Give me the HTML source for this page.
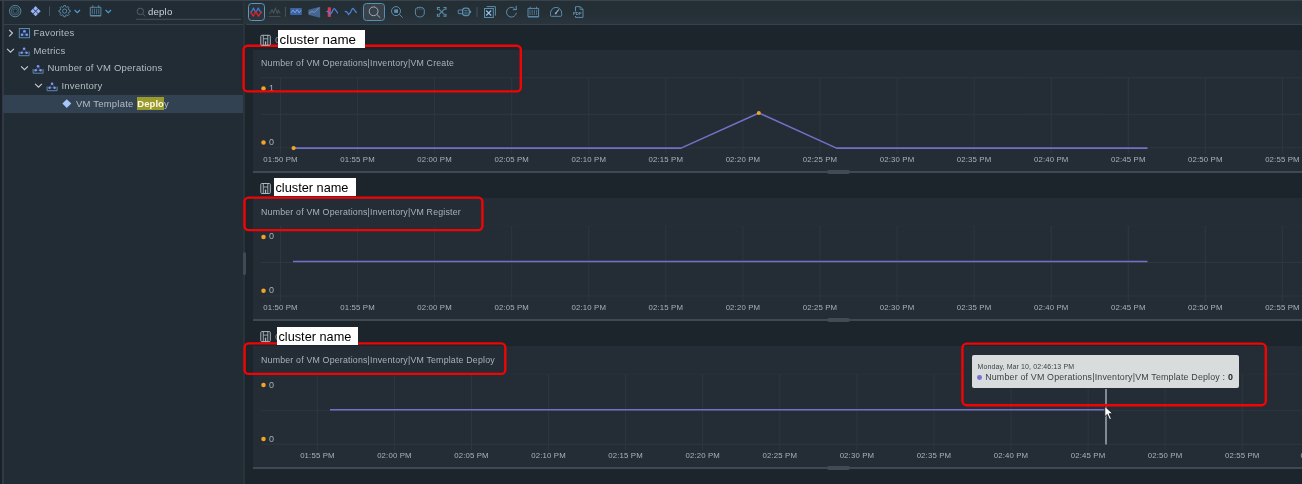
<!DOCTYPE html>
<html><head><meta charset="utf-8"><title>Metrics</title>
<style>
html,body{margin:0;padding:0;}
body{width:1302px;height:484px;overflow:hidden;background:#1c252c;font-family:"Liberation Sans", sans-serif;position:relative;color:#b4bcc3;}
div,svg{position:absolute;}
.row,.ctitle,.ylab,.wb,.tip,.sh,.q{will-change:transform;}
.ov{left:0;top:0;pointer-events:none;will-change:transform;}
.left{left:4px;top:0;width:239px;height:484px;background:#222c35;}
.edge{left:0;top:0;width:4px;height:484px;background:linear-gradient(90deg,#1a2028 0,#1a2028 1.8px,#313a43 2.2px,#313a43 3.8px,#232c35 4px);}
.split{left:243px;top:0;width:2.4px;height:484px;background:#29333c;}
.topbar{left:0;top:0;width:1302px;height:1.2px;background:#39424a;}
.tline{top:23.5px;height:1px;background:#35414b;}
.row{left:3px;width:240px;height:17.5px;font-size:9.5px;letter-spacing:0.2px;line-height:17.5px;color:#b4bcc3;white-space:nowrap;}
.row span.t{position:absolute;top:0;}
.selbg{left:3px;width:240px;top:95.3px;height:17.6px;background:#324252;}
.hl{background:#9b9a2c;color:#fbf9e4;font-weight:bold;padding:0.9px 0 1.2px 0.6px;margin-left:0.4px;letter-spacing:0.05px;}
.panel{left:253px;width:1049px;height:122px;background:#242d35;}
.pline{left:253px;width:1049px;height:2.1px;background:#3e4952;}
.handle{left:826.7px;width:23.7px;height:4.2px;background:#414b54;border-radius:2px;}
.ctitle{left:260.5px;font-size:8.8px;letter-spacing:0.19px;line-height:12px;color:#a9b2ba;white-space:nowrap;}
.ylab{left:268.6px;font-size:9px;line-height:12px;color:#a9b2ba;}
.xl text{font-size:7.8px;letter-spacing:0.14px;fill:#a9b2ba;font-family:"Liberation Sans", sans-serif;}
.wb{background:#fff;color:#000;font-size:13.6px;line-height:18px;white-space:nowrap;}
.tip{left:972px;top:355.2px;width:266.8px;height:33.3px;background:#d9dcdd;border-radius:2px;}
.tip .l1{left:5.5px;top:6.6px;font-size:7px;letter-spacing:0.11px;line-height:10px;color:#3c4247;white-space:nowrap;}
.tip .l2{left:13.2px;top:16.2px;font-size:8.9px;letter-spacing:0.17px;line-height:12px;color:#3c4247;white-space:nowrap;}
.tip .d{left:5.4px;top:20px;width:4.8px;height:4.8px;border-radius:50%;background:#7b6fd6;}
.sh{font-size:10px;color:#8a949c;}
</style></head><body>
<div class="edge"></div>
<div class="left"></div>
<div class="split"></div>
<div style="left:245.4px;top:0;width:1057px;height:24px;background:linear-gradient(#242e35 0%,#252f36 55%,#2a343c 100%)"></div>
<div class="tline" style="left:3px;width:240px"></div>
<div class="tline" style="left:246px;width:1056px"></div>
<div class="topbar"></div>

<svg class="ov" width="246" height="26">
 <g fill="none" stroke="#5f91ab" stroke-width="0.9">
  <circle cx="15.2" cy="11.1" r="5.7"/><circle cx="15.2" cy="11.1" r="3.9" stroke-opacity="0.7" stroke-width="0.8"/><circle cx="15.2" cy="11.1" r="2.2" stroke-opacity="0.6" stroke-width="0.8"/>
 </g>
 <circle cx="15.2" cy="11.2" r="0.9" fill="#1a2a3a"/>
 <g fill="#98b4f6" transform="translate(35.6 11.2) rotate(45)">
  <rect x="-3.6" y="-3.6" width="3.3" height="3.3"/><rect x="0.3" y="-3.6" width="3.3" height="3.3"/>
  <rect x="-3.6" y="0.3" width="3.3" height="3.3"/><rect x="0.3" y="0.3" width="3.3" height="3.3"/>
 </g>
 <line x1="49.5" y1="6.5" x2="49.5" y2="16" stroke="#46525c" stroke-width="1"/>
 <!-- gear -->
 <g fill="none" stroke="#5d8eac" stroke-width="0.9" stroke-linejoin="round">
  <circle cx="64.6" cy="11.1" r="2.1"/>
  <path d="M63.57 6.82L63.84 5.45L65.36 5.45L65.63 6.82L66.90 7.35L68.06 6.57L69.13 7.64L68.35 8.80L68.88 10.07L70.25 10.34L70.25 11.86L68.88 12.13L68.35 13.40L69.13 14.56L68.06 15.63L66.90 14.85L65.63 15.38L65.36 16.75L63.84 16.75L63.57 15.38L62.30 14.85L61.14 15.63L60.07 14.56L60.85 13.40L60.32 12.13L58.95 11.86L58.95 10.34L60.32 10.07L60.85 8.80L60.07 7.64L61.14 6.57L62.30 7.35Z"/>
  <!-- calendar -->
  <path d="M90.3 7.3h10.6v8.3h-10.6z"/>
  <path d="M90.3 15.8h10.6" stroke-width="1.3"/>
  <path d="M92.8 5.3v2.4M98.7 5.3v2.4" stroke-width="0.9"/>
  <path d="M92.3 8.6v5.6M94.45 8.6v5.6M96.6 8.6v5.6M98.75 8.6v5.6" stroke-width="0.8" stroke="#557f99"/>
 </g>
 <g fill="none" stroke="#4f9ccd" stroke-width="1.15">
  <path d="M74.6 10l2.7 2.7 2.7-2.7"/>
  <path d="M105.6 10l2.7 2.7 2.7-2.7"/>
 </g>
 <g fill="none" stroke="#55606a" stroke-width="1">
  <circle cx="140.3" cy="11.4" r="3.2"/><path d="M142.6 13.8l2.6 2.6"/>
 </g>
 <line x1="136" y1="19.3" x2="241" y2="19.3" stroke="#46525c" stroke-width="1"/>
</svg>
<div class="q" style="left:148.3px;top:6px;font-size:9.6px;letter-spacing:0.2px;line-height:12px;color:#ccd3d8;">deplo</div>


<div class="selbg"></div>
<svg class="ov" width="246" height="120">
 <path d="M9.2 29.900000000000002l3.2 3.2-3.2 3.2" fill="none" stroke="#c3cad0" stroke-width="1.2"/><rect x="19.3" y="28.499999999999996" width="10.2" height="9.2" fill="#1d2f45" stroke="#5a8aa8" stroke-width="1"/><path d="M24.4 31.299999999999997l-2.400 3.500h4.800z" fill="none" stroke="#5f7fd8" stroke-width="0.600" stroke-opacity="0.700"/><g fill="#8098f4"><circle cx="24.4" cy="31.299999999999997" r="1.3"/><circle cx="22" cy="34.8" r="1.3"/><circle cx="26.8" cy="34.8" r="1.3"/></g>
 <path d="M7.1 48.9l3.4 3.2 3.4-3.2" fill="none" stroke="#c3cad0" stroke-width="1.2"/><path d="M24.1 48.8l-2.5 3.9h5z" fill="none" stroke="#5f7fd8" stroke-width="0.6" stroke-opacity="0.7"/><g fill="#8098f4"><circle cx="24.1" cy="48.8" r="1.3"/><circle cx="21.6" cy="52.7" r="1.3"/><circle cx="26.6" cy="52.7" r="1.3"/></g><path d="M19.1 51.5v4.2h10v-4.2" fill="none" stroke="#5a8aa8" stroke-width="1"/>
 <path d="M21.1 66.4l3.4 3.2 3.4-3.2" fill="none" stroke="#c3cad0" stroke-width="1.2"/><path d="M38.1 66.3l-2.5 3.9h5z" fill="none" stroke="#5f7fd8" stroke-width="0.6" stroke-opacity="0.7"/><g fill="#8098f4"><circle cx="38.1" cy="66.3" r="1.3"/><circle cx="35.6" cy="70.2" r="1.3"/><circle cx="40.6" cy="70.2" r="1.3"/></g><path d="M33.1 69.0v4.2h10v-4.2" fill="none" stroke="#5a8aa8" stroke-width="1"/>
 <path d="M35.1 83.9l3.4 3.2 3.4-3.2" fill="none" stroke="#c3cad0" stroke-width="1.2"/><path d="M52.1 83.8l-2.5 3.9h5z" fill="none" stroke="#5f7fd8" stroke-width="0.6" stroke-opacity="0.7"/><g fill="#8098f4"><circle cx="52.1" cy="83.8" r="1.3"/><circle cx="49.6" cy="87.7" r="1.3"/><circle cx="54.6" cy="87.7" r="1.3"/></g><path d="M47.1 86.5v4.2h10v-4.2" fill="none" stroke="#5a8aa8" stroke-width="1"/>
 <rect x="-3.15" y="-3.15" width="6.3" height="6.3" fill="#a8c6fc" transform="translate(66.8 103.6) rotate(45)"/>
</svg>
<div class="row" style="top:24px"><span class="t" style="left:30.5px">Favorites</span></div>
<div class="row" style="top:41.5px"><span class="t" style="left:30.5px">Metrics</span></div>
<div class="row" style="top:59px"><span class="t" style="left:44.5px">Number of VM Operations</span></div>
<div class="row" style="top:76.5px"><span class="t" style="left:58.5px">Inventory</span></div>
<div class="row" style="top:94.5px"><span class="t" style="left:73px">VM Template <span class="hl">Deplo</span>y</span></div>


<div style="left:247.8px;top:3px;width:17.4px;height:17.9px;box-sizing:border-box;border:1.2px solid #5d97bb;border-radius:3.5px;background:#2b343c;"></div>
<div style="left:363px;top:2.6px;width:22px;height:18.8px;box-sizing:border-box;border:1.3px solid #5590b5;border-radius:3.5px;background:#38424a;"></div>
<svg class="ov" width="700" height="26">
 <!-- 1 red/blue wave -->
 <path d="M250.2 12.3l1.3-.6 2-3.6 2.3 4.6 2.4-4.6 2.2 3.6 1.5.6" fill="none" stroke="#3f7ad2" stroke-width="1.2" stroke-linejoin="round"/>
 <path d="M250.2 12.6l1.2.5 1.9 3.1 2.5-5 2.6 5 2-3.1 1.5-.5" fill="none" stroke="#e3242c" stroke-width="1.2" stroke-linejoin="round"/>
 <!-- 2 grey -->
 <path d="M269 13.5l1.6-.8 1.4-3 1.6 3.3 1.8-4.6 1.7 4.8 1.4-2.8.9 2.3 1 .6" fill="none" stroke="#4a545c" stroke-width="1.1"/>
 <line x1="268.8" y1="16.5" x2="280.5" y2="16.5" stroke="#434d55" stroke-width="1"/>
 <line x1="285.4" y1="7" x2="285.4" y2="16.7" stroke="#49535b" stroke-width="1"/>
 <!-- 3 blue rect -->
 <rect x="290.2" y="8" width="11.6" height="7" fill="#3b63a6"/>
 <path d="M291 12.8l2-2.8 2 2.8 2.2-3.2 2 3.2 1.8-2.6" fill="none" stroke="#8fb0e2" stroke-width="0.8"/>
 <!-- 4 trapezoid -->
 <path d="M308.3 9.8l11.8-3v11l-11.8-3.100z" fill="#47668f"/>
 <path d="M309 13l3.200-1.500 2.300.8 4.500-4.500" fill="none" stroke="#7d9cd6" stroke-width="0.8"/>
 <!-- 5 red bar + wave -->
 <rect x="327.7" y="7.3" width="3.200" height="9.600" fill="#d63a55"/>
 <path d="M326.900 11.400q1.800 0 3.100 2.800q2.200-1.500 3-4.200q.9-2.200 1.900-.9l2.700 3.700" fill="none" stroke="#4d80d8" stroke-width="1.200" stroke-linecap="round"/>
 <!-- 6 blue wave -->
 <path d="M345.200 11.400q1.900 0 3.400 3.100q2.100-1.400 3.100-4.600q.9-2.300 2-.8l2.600 3.400" fill="none" stroke="#4d80d8" stroke-width="1.250" stroke-linecap="round"/>
 <line x1="361.400" y1="7" x2="361.400" y2="16.700" stroke="#2f3940" stroke-width="1"/>
 <!-- search -->
 <g fill="none" stroke="#a3adb5" stroke-width="1">
  <circle cx="373.600" cy="11.300" r="4.400"/><path d="M376.800 14.500l3.400 3.200"/>
 </g>
 <g fill="none" stroke="#5a8cab" stroke-width="1">
  <!-- zoom rect -->
  <circle cx="396" cy="11.100" r="4.500"/><path d="M399.300 14.300l3.400 3.300"/><rect x="394.200" y="9.400" width="3.800" height="3.500" fill="#5f8fae" stroke="none"/>
  <!-- hand -->
  <path d="M415.400 10.300c0-2.300 1.800-3 4.400-3s4.500.7 4.500 3v2.600c0 2.400-1.700 4-4 4h-1c-2.300 0-3.900-1.600-3.900-4z"/>
  <path d="M417.600 8v2.200M419.800 7.600v2.400M422 8v2.200" stroke-width="0.700" stroke-opacity="0.700"/>
  <!-- expand -->
  <path d="M438.700 8.900l6 6M444.700 8.900l-6 6" stroke-width="1.200"/>
  <path d="M437.500 10v-2.500h2.500M443.400 7.500h2.500v2.500M445.900 13.700v2.500h-2.500M440 16.200h-2.500v-2.500" stroke-width="1.200"/>
  <!-- link -->
  <rect x="462.600" y="8.200" width="6.700" height="7.300" rx="2.500" stroke-width="1.300"/>
  <path d="M464.300 10.700h3.300M464.300 13h3.300" stroke-width="0.900"/>
  <rect x="458.200" y="10" width="4.400" height="3.700" rx="0.800"/>
  <path d="M469.300 11.850h1.800" stroke-width="2.400"/>
 </g>
 <line x1="477" y1="7" x2="477" y2="16.800" stroke="#49535b" stroke-width="1"/>
 <g fill="none" stroke="#5a8cab" stroke-width="1">
  <!-- close all -->
  <rect x="484.500" y="8.500" width="8.800" height="9"/><path d="M486.700 6.600h8.700v9"/>
  <path d="M486.200 10.500l5 5M491.200 10.500l-5 5" stroke="#9dc0e6" stroke-width="1.200"/>
  <!-- refresh -->
  <path d="M516.300 12.800a4.900 4.900 0 1 1-1.900-4.500"/><path d="M512.800 9.700l3.600-.3-.3-3.500" stroke-width="1.100"/>
  <!-- calendar -->
  <path d="M528 8.400h10.600v8.300h-10.600z"/>
  <path d="M528 16.800h10.600" stroke-width="1.200"/>
  <path d="M530.200 6.700v2M536.500 6.700v2" stroke-width="0.900"/>
  <path d="M530 9.700v5.300M532.200 9.700v5.300M534.400 9.700v5.300M536.600 9.700v5.300" stroke-width="0.800" stroke="#547d97"/>
  <!-- gauge -->
  <path d="M551.300 16.300c-.6 0-.8-.4-.8-1v-2c0-3.300 2.400-5.900 5.600-5.900s5.600 2.600 5.600 5.900v2c0 .6-.2 1-.8 1z"/>
  <path d="M555.900 13.200l2.900-3.700" stroke="#8db6d6" stroke-width="1.200"/><circle cx="555.700" cy="13.400" r="0.900" fill="#8db6d6" stroke="none"/>
  <!-- pdf -->
  <path d="M575.500 11.500v-4.800h4.800l2.700 2.700v8h-7.500v-1.400"/><path d="M580.200 6.700v2.800h2.800" stroke-width="0.800"/>
 </g>
 <text x="573" y="14.900" font-size="4.300" font-weight="bold" fill="#6a9cbc" font-family="Liberation Sans, sans-serif">PDF</text>
</svg>

<div class="panel" style="top:49.8px"></div>
<div class="pline" style="top:170.6px"></div>
<div class="handle" style="top:169.8px"></div>
<svg class="ov" width="1302" height="484"><g stroke="#2d373f" stroke-width="1" fill="none"><line x1="261" y1="77.8" x2="1302" y2="77.8"/><line x1="261" y1="114.3" x2="1302" y2="114.3"/><line x1="261" y1="147.8" x2="1302" y2="147.8"/><line x1="280.5" y1="77.8" x2="280.5" y2="153.8"/><line x1="357.6" y1="77.8" x2="357.6" y2="153.8"/><line x1="434.6" y1="77.8" x2="434.6" y2="153.8"/><line x1="511.7" y1="77.8" x2="511.7" y2="153.8"/><line x1="588.8" y1="77.8" x2="588.8" y2="153.8"/><line x1="665.8" y1="77.8" x2="665.8" y2="153.8"/><line x1="742.9" y1="77.8" x2="742.9" y2="153.8"/><line x1="820.0" y1="77.8" x2="820.0" y2="153.8"/><line x1="897.1" y1="77.8" x2="897.1" y2="153.8"/><line x1="974.1" y1="77.8" x2="974.1" y2="153.8"/><line x1="1051.2" y1="77.8" x2="1051.2" y2="153.8"/><line x1="1128.3" y1="77.8" x2="1128.3" y2="153.8"/><line x1="1205.3" y1="77.8" x2="1205.3" y2="153.8"/><line x1="1282.4" y1="77.8" x2="1282.4" y2="153.8"/><line x1="1359.5" y1="77.8" x2="1359.5" y2="153.8"/></g><g class="xl"><text x="280.5" y="162" text-anchor="middle">01:50 PM</text><text x="357.6" y="162" text-anchor="middle">01:55 PM</text><text x="434.6" y="162" text-anchor="middle">02:00 PM</text><text x="511.7" y="162" text-anchor="middle">02:05 PM</text><text x="588.8" y="162" text-anchor="middle">02:10 PM</text><text x="665.8" y="162" text-anchor="middle">02:15 PM</text><text x="742.9" y="162" text-anchor="middle">02:20 PM</text><text x="820.0" y="162" text-anchor="middle">02:25 PM</text><text x="897.1" y="162" text-anchor="middle">02:30 PM</text><text x="974.1" y="162" text-anchor="middle">02:35 PM</text><text x="1051.2" y="162" text-anchor="middle">02:40 PM</text><text x="1128.3" y="162" text-anchor="middle">02:45 PM</text><text x="1205.3" y="162" text-anchor="middle">02:50 PM</text><text x="1282.4" y="162" text-anchor="middle">02:55 PM</text><text x="1359.5" y="162" text-anchor="middle">03:00 PM</text></g><polyline points="293.6,148.1 681,148.1 759,113 836.5,148.1 1147.5,148.1" fill="none" stroke="#7370c5" stroke-width="1.55" stroke-linejoin="round"/><circle cx="293.6" cy="148.1" r="2.1" fill="#f2a524"/><circle cx="758.8" cy="113" r="2" fill="#f2a524"/></svg>
<div class="ctitle" style="top:57.3px">Number of VM Operations|Inventory|VM Create</div>
<svg class="ov" width="300" height="484"><circle cx="263.5" cy="88.6" r="2.25" fill="#f2a524"/><circle cx="263.5" cy="142.6" r="2.25" fill="#f2a524"/></svg>
<div class="ylab" style="top:82.1px">1</div>
<div class="ylab" style="top:136.1px">0</div>
<div class="panel" style="top:198px"></div>
<div class="pline" style="top:318.8px"></div>
<div class="handle" style="top:318px"></div>
<svg class="ov" width="1302" height="484"><g stroke="#2d373f" stroke-width="1" fill="none"><line x1="261" y1="226" x2="1302" y2="226" stroke-opacity="0.35"/><line x1="261" y1="262.5" x2="1302" y2="262.5"/><line x1="261" y1="296" x2="1302" y2="296"/><line x1="280.5" y1="226" x2="280.5" y2="302"/><line x1="357.6" y1="226" x2="357.6" y2="302"/><line x1="434.6" y1="226" x2="434.6" y2="302"/><line x1="511.7" y1="226" x2="511.7" y2="302"/><line x1="588.8" y1="226" x2="588.8" y2="302"/><line x1="665.8" y1="226" x2="665.8" y2="302"/><line x1="742.9" y1="226" x2="742.9" y2="302"/><line x1="820.0" y1="226" x2="820.0" y2="302"/><line x1="897.1" y1="226" x2="897.1" y2="302"/><line x1="974.1" y1="226" x2="974.1" y2="302"/><line x1="1051.2" y1="226" x2="1051.2" y2="302"/><line x1="1128.3" y1="226" x2="1128.3" y2="302"/><line x1="1205.3" y1="226" x2="1205.3" y2="302"/><line x1="1282.4" y1="226" x2="1282.4" y2="302"/><line x1="1359.5" y1="226" x2="1359.5" y2="302"/></g><g class="xl"><text x="280.5" y="310" text-anchor="middle">01:50 PM</text><text x="357.6" y="310" text-anchor="middle">01:55 PM</text><text x="434.6" y="310" text-anchor="middle">02:00 PM</text><text x="511.7" y="310" text-anchor="middle">02:05 PM</text><text x="588.8" y="310" text-anchor="middle">02:10 PM</text><text x="665.8" y="310" text-anchor="middle">02:15 PM</text><text x="742.9" y="310" text-anchor="middle">02:20 PM</text><text x="820.0" y="310" text-anchor="middle">02:25 PM</text><text x="897.1" y="310" text-anchor="middle">02:30 PM</text><text x="974.1" y="310" text-anchor="middle">02:35 PM</text><text x="1051.2" y="310" text-anchor="middle">02:40 PM</text><text x="1128.3" y="310" text-anchor="middle">02:45 PM</text><text x="1205.3" y="310" text-anchor="middle">02:50 PM</text><text x="1282.4" y="310" text-anchor="middle">02:55 PM</text><text x="1359.5" y="310" text-anchor="middle">03:00 PM</text></g><polyline points="293,261.4 1147.5,261.4" fill="none" stroke="#7370c5" stroke-width="1.55"/></svg>
<div class="ctitle" style="top:205.5px">Number of VM Operations|Inventory|VM Register</div>
<svg class="ov" width="300" height="484"><circle cx="263.5" cy="236.9" r="2.25" fill="#f2a524"/><circle cx="263.5" cy="290.8" r="2.25" fill="#f2a524"/></svg>
<div class="ylab" style="top:230.4px">0</div>
<div class="ylab" style="top:284.3px">0</div>
<div class="panel" style="top:346.2px"></div>
<div class="pline" style="top:467.0px"></div>
<div class="handle" style="top:466.2px"></div>
<svg class="ov" width="1302" height="484"><g stroke="#2d373f" stroke-width="1" fill="none"><line x1="261" y1="374.2" x2="1302" y2="374.2" stroke-opacity="0.35"/><line x1="261" y1="410.7" x2="1302" y2="410.7"/><line x1="261" y1="444.2" x2="1302" y2="444.2"/><line x1="317.4" y1="374.2" x2="317.4" y2="450.2"/><line x1="394.4" y1="374.2" x2="394.4" y2="450.2"/><line x1="471.5" y1="374.2" x2="471.5" y2="450.2"/><line x1="548.6" y1="374.2" x2="548.6" y2="450.2"/><line x1="625.6" y1="374.2" x2="625.6" y2="450.2"/><line x1="702.7" y1="374.2" x2="702.7" y2="450.2"/><line x1="779.8" y1="374.2" x2="779.8" y2="450.2"/><line x1="856.9" y1="374.2" x2="856.9" y2="450.2"/><line x1="933.9" y1="374.2" x2="933.9" y2="450.2"/><line x1="1011.0" y1="374.2" x2="1011.0" y2="450.2"/><line x1="1088.1" y1="374.2" x2="1088.1" y2="450.2"/><line x1="1165.1" y1="374.2" x2="1165.1" y2="450.2"/><line x1="1242.2" y1="374.2" x2="1242.2" y2="450.2"/><line x1="1319.3" y1="374.2" x2="1319.3" y2="450.2"/></g><g class="xl"><text x="317.4" y="458" text-anchor="middle">01:55 PM</text><text x="394.4" y="458" text-anchor="middle">02:00 PM</text><text x="471.5" y="458" text-anchor="middle">02:05 PM</text><text x="548.6" y="458" text-anchor="middle">02:10 PM</text><text x="625.6" y="458" text-anchor="middle">02:15 PM</text><text x="702.7" y="458" text-anchor="middle">02:20 PM</text><text x="779.8" y="458" text-anchor="middle">02:25 PM</text><text x="856.9" y="458" text-anchor="middle">02:30 PM</text><text x="933.9" y="458" text-anchor="middle">02:35 PM</text><text x="1011.0" y="458" text-anchor="middle">02:40 PM</text><text x="1088.1" y="458" text-anchor="middle">02:45 PM</text><text x="1165.1" y="458" text-anchor="middle">02:50 PM</text><text x="1242.2" y="458" text-anchor="middle">02:55 PM</text><text x="1319.3" y="458" text-anchor="middle">03:00 PM</text><text x="1300.6" y="458">03:00 PM</text></g><polyline points="330,409.7 1105.5,409.7" fill="none" stroke="#7370c5" stroke-width="1.55"/><line x1="1106" y1="389" x2="1106" y2="444.5" stroke="#7f8a93" stroke-width="2"/></svg>
<div class="ctitle" style="top:353.7px">Number of VM Operations|Inventory|VM Template Deploy</div>
<svg class="ov" width="300" height="484"><circle cx="263.5" cy="385.1" r="2.25" fill="#f2a524"/><circle cx="263.5" cy="439" r="2.25" fill="#f2a524"/></svg>
<div class="ylab" style="top:378.6px">0</div>
<div class="ylab" style="top:432.5px">0</div>

<div class="tip"><div class="l1">Monday, Mar 10, 02:46:13 PM</div><div class="d"></div><div class="l2">Number of VM Operations|Inventory|VM Template Deploy : <b style="color:#22272b">0</b></div></div>


<svg class="ov" width="1302" height="484"><g fill="none" stroke="#f20404" stroke-width="2.4">
<rect x="243.60" y="45.70" width="277.20" height="45.70" rx="4.00"/>
<rect x="244.50" y="197.60" width="237.90" height="32.50" rx="4.00"/>
<rect x="244.60" y="343.40" width="260.70" height="30.50" rx="4.00"/>
<rect x="962.40" y="343.60" width="303.40" height="61.60" rx="4.40"/>
</g></svg>


<svg class="ov" width="400" height="484"><g fill="none" stroke="#aeb6bd" stroke-width="1">
 <rect x="260.8" y="35.3" width="9.500" height="10" rx="1"/>
 <path d="M263.3 35.3v10M267.8 35.3v10M263.3 38.8h4.500" stroke-width="0.900"/>
 <path d="M265.55 41.3v4" stroke-width="1.300"/>
</g></svg>
<div class="sh" style="left:275.40000000000003px;top:34.3px;line-height:12px">c</div>
<div class="wb" style="left:277.8px;top:29.9px;width:87.2px;height:18.3px;font-size:13.37px"><span style="position:absolute;left:1.5px;top:0.6px">cluster name</span></div>

<svg class="ov" width="400" height="484"><g fill="none" stroke="#aeb6bd" stroke-width="1">
 <rect x="260.8" y="183.5" width="9.500" height="10" rx="1"/>
 <path d="M263.3 183.5v10M267.8 183.5v10M263.3 187.0h4.500" stroke-width="0.900"/>
 <path d="M265.55 189.5v4" stroke-width="1.300"/>
</g></svg>
<div class="sh" style="left:275.40000000000003px;top:182.5px;line-height:12px">c</div>
<div class="wb" style="left:273.8px;top:177.9px;width:82.4px;height:18.3px;font-size:12.74px"><span style="position:absolute;left:1.5px;top:0.6px">cluster name</span></div>

<svg class="ov" width="400" height="484"><g fill="none" stroke="#aeb6bd" stroke-width="1">
 <rect x="260.8" y="331.6" width="9.500" height="10" rx="1"/>
 <path d="M263.3 331.6v10M267.8 331.6v10M263.3 335.1h4.500" stroke-width="0.900"/>
 <path d="M265.55 337.6v4" stroke-width="1.300"/>
</g></svg>
<div class="sh" style="left:275.40000000000003px;top:330.6px;line-height:12px">c</div>
<div class="wb" style="left:276.9px;top:326.8px;width:81.1px;height:18.3px;font-size:12.72px"><span style="position:absolute;left:1.5px;top:0.6px">cluster name</span></div>


<svg class="ov" width="1302" height="484"><path d="M1104.8 406.400v10.300l2.500-2.300 2.300 5.200 1.800-.8-2.300-5.100h3.700z" fill="#fff" stroke="#10151a" stroke-width="0.800" stroke-linejoin="round"/></svg>
<div style="left:243px;top:252px;width:3px;height:23px;background:#3f4a54;border-radius:1.500px"></div>

</body></html>
